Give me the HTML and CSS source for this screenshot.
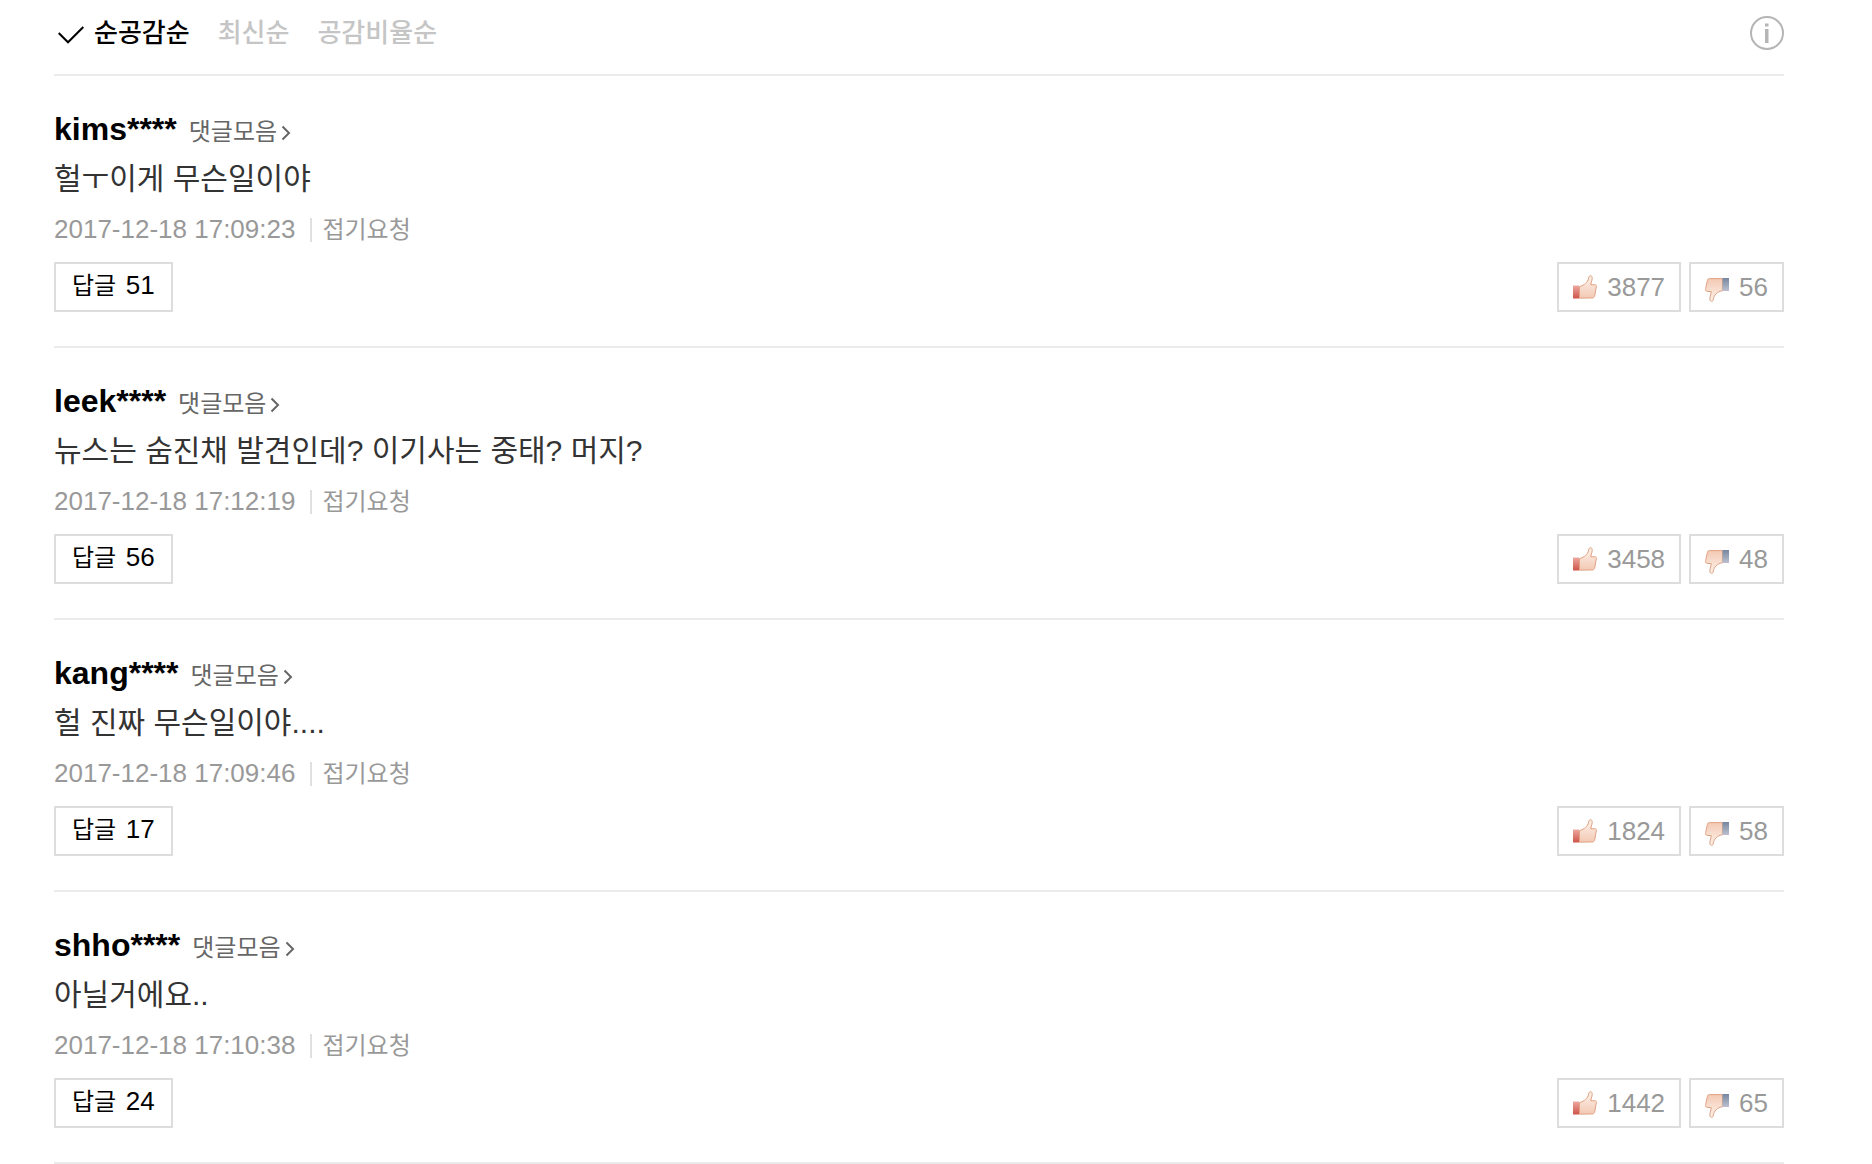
FILE: index.html
```html
<!DOCTYPE html>
<html lang="ko">
<head>
  <meta charset="UTF-8">
  <title>댓글</title>
  <link rel="stylesheet" href="styles.css">
</head>
<body>
  <svg class="sprite" aria-hidden="true">
    <defs>
      <linearGradient id="skin" x1="0" y1="0" x2="0" y2="1">
        <stop offset="0" stop-color="#fdf3ea"/>
        <stop offset="1" stop-color="#f3c9b4"/>
      </linearGradient>
      <linearGradient id="skin-down" x1="0" y1="0" x2="0" y2="1">
        <stop offset="0" stop-color="#f3c9b4"/>
        <stop offset="1" stop-color="#fdf3ea"/>
      </linearGradient>
      <linearGradient id="red" x1="0" y1="0" x2="0" y2="1">
        <stop offset="0" stop-color="#eda9a2"/>
        <stop offset="1" stop-color="#cf5348"/>
      </linearGradient>
      <linearGradient id="blue" x1="0" y1="0" x2="0" y2="1">
        <stop offset="0" stop-color="#76869f"/>
        <stop offset="1" stop-color="#bcc1d0"/>
      </linearGradient>
    </defs>
    <symbol id="up" viewBox="0 0 24 24">
      <path d="M6.500 11.500C11 10.500 15 7 15.700 3C15.900 1.200 16.700.6 17.600.7C19.300.9 19.500 3 18.900 5.200L17.700 9.700L22.200 9.800C23.300 9.900 23.500 10.800 23.300 11.900L21.800 20.500C21.500 22.100 20.800 22.800 19.500 22.900L6.500 23.200Z" fill="url(#skin)" stroke="#e0a283"/>
      <path d="M0 10.500H6V23.500H0Z" fill="url(#red)"/>
    </symbol>
    <symbol id="down" viewBox="0 0 24 24">
      <path d="M17.500.6H4.500C3.200.6 2.600 1.400 2.300 2.700L.6 10.800C.4 12.200.8 13.200 2 13.300L6.300 13.700L5 19.500C4.600 21.700 5.100 23.300 6.500 23.400C7.700 23.400 8.100 22.300 8.400 21C9 17 12 13.700 17.500 12.700Z" fill="url(#skin-down)" stroke="#e0a283"/>
      <path d="M17.500 0H24V13H17.500Z" fill="url(#blue)"/>
    </symbol>
    <symbol id="arrow" viewBox="0 0 10 16">
      <path d="M1.500 1.500L8 8L1.500 14.500" fill="none" stroke="#666" stroke-width="2"/>
    </symbol>
  </svg>

  <div class="comments">
    <div class="sort">
      <ul class="sort-list">
        <li>
          <a class="on" href="#">
            <svg class="check" viewBox="0 0 26 18" aria-hidden="true"><path d="M.7 7L10 16.300L25.300 1" fill="none" stroke="#000" stroke-width="2"/></svg>
            순공감순
          </a>
        </li>
        <li><a href="#">최신순</a></li>
        <li><a href="#">공감비율순</a></li>
      </ul>
      <button class="info" type="button" aria-label="안내">
        <svg viewBox="0 0 34 34" aria-hidden="true">
          <circle cx="17" cy="17" r="16" fill="none" stroke="#b5b5b5" stroke-width="2"/>
          <path d="M15 7.500H18.500V10.500H15ZM15 13H18.500V27H15Z" fill="#b5b5b5"/>
        </svg>
      </button>
    </div>

    <ul class="list">
      <li class="comment">
        <div class="head">
          <strong class="name">kims****</strong>
          <a class="more" href="#">댓글모음<svg class="arrow" aria-hidden="true"><use href="#arrow"/></svg></a>
        </div>
        <p class="text">헐ㅜ이게 무슨일이야</p>
        <div class="meta">
          <span class="date">2017-12-18 17:09:23</span>
          <a class="fold" href="#">접기요청</a>
        </div>
        <div class="tools">
          <button class="btn reply" type="button">답글 <span class="num">51</span></button>
          <button class="btn vote" type="button" aria-label="공감 3877"><svg class="thumb" aria-hidden="true"><use href="#up"/></svg>3877</button>
          <button class="btn vote" type="button" aria-label="비공감 56"><svg class="thumb down" aria-hidden="true"><use href="#down"/></svg>56</button>
        </div>
      </li>

      <li class="comment">
        <div class="head">
          <strong class="name">leek****</strong>
          <a class="more" href="#">댓글모음<svg class="arrow" aria-hidden="true"><use href="#arrow"/></svg></a>
        </div>
        <p class="text">뉴스는 숨진채 발견인데? 이기사는 중태? 머지?</p>
        <div class="meta">
          <span class="date">2017-12-18 17:12:19</span>
          <a class="fold" href="#">접기요청</a>
        </div>
        <div class="tools">
          <button class="btn reply" type="button">답글 <span class="num">56</span></button>
          <button class="btn vote" type="button" aria-label="공감 3458"><svg class="thumb" aria-hidden="true"><use href="#up"/></svg>3458</button>
          <button class="btn vote" type="button" aria-label="비공감 48"><svg class="thumb down" aria-hidden="true"><use href="#down"/></svg>48</button>
        </div>
      </li>

      <li class="comment">
        <div class="head">
          <strong class="name">kang****</strong>
          <a class="more" href="#">댓글모음<svg class="arrow" aria-hidden="true"><use href="#arrow"/></svg></a>
        </div>
        <p class="text">헐 진짜 무슨일이야....</p>
        <div class="meta">
          <span class="date">2017-12-18 17:09:46</span>
          <a class="fold" href="#">접기요청</a>
        </div>
        <div class="tools">
          <button class="btn reply" type="button">답글 <span class="num">17</span></button>
          <button class="btn vote" type="button" aria-label="공감 1824"><svg class="thumb" aria-hidden="true"><use href="#up"/></svg>1824</button>
          <button class="btn vote" type="button" aria-label="비공감 58"><svg class="thumb down" aria-hidden="true"><use href="#down"/></svg>58</button>
        </div>
      </li>

      <li class="comment">
        <div class="head">
          <strong class="name">shho****</strong>
          <a class="more" href="#">댓글모음<svg class="arrow" aria-hidden="true"><use href="#arrow"/></svg></a>
        </div>
        <p class="text">아닐거에요..</p>
        <div class="meta">
          <span class="date">2017-12-18 17:10:38</span>
          <a class="fold" href="#">접기요청</a>
        </div>
        <div class="tools">
          <button class="btn reply" type="button">답글 <span class="num">24</span></button>
          <button class="btn vote" type="button" aria-label="공감 1442"><svg class="thumb" aria-hidden="true"><use href="#up"/></svg>1442</button>
          <button class="btn vote" type="button" aria-label="비공감 65"><svg class="thumb down" aria-hidden="true"><use href="#down"/></svg>65</button>
        </div>
      </li>
    </ul>
  </div>
</body>
</html>
```

FILE: styles.css
```css
body { margin: 0; background: #fff; color: #000; font-family: "Liberation Sans", "Noto Sans CJK KR", sans-serif; }
ul { list-style: none; margin: 0; padding: 0; }
a { color: inherit; text-decoration: none; }
button { font-family: inherit; background: #fff; cursor: pointer; }
.sprite { display: block; width: 0; height: 0; }

.comments { padding: 0 88px 0 54px; }

.sort { display: flex; justify-content: space-between; align-items: center; padding: 13px 0 21px; border-bottom: 2px solid #ebebeb; }
.sort-list { display: flex; gap: 28px; font-size: 26px; font-weight: 500; line-height: 40px; color: #c5c5c5; }
.sort-list a { display: flex; align-items: center; }
.sort-list .on { color: #000; }
.check { width: 26px; height: 18px; margin: 3px 10px 0 4px; }
.info { width: 34px; height: 34px; padding: 0; border: 0; }
.info svg { display: block; }

.comment { padding: 31px 0 34px; border-bottom: 2px solid #ebebeb; }
.head { display: flex; align-items: baseline; gap: 12px; line-height: 44px; }
.name { font-size: 32px; }
.more { font-size: 24px; line-height: 32px; color: #666; }
.arrow { width: 10px; height: 16px; margin-left: 4px; vertical-align: -1px; }
.text { margin: 2px 0 0; font-size: 30px; line-height: 52px; color: #333; }
.meta { display: flex; align-items: center; line-height: 40px; margin-top: 4px; color: #999; }
.date { font-size: 26px; }
.fold { display: flex; align-items: center; padding-top: 2px; font-size: 24px; line-height: 38px; }
.fold::before { content: ""; width: 2px; height: 24px; margin: 0 10px 0 15px; background: #e0e0e0; }
.tools { display: flex; gap: 8px; margin-top: 13px; }
.btn { box-sizing: border-box; height: 50px; border: 2px solid #ddd; }
.reply { margin-right: auto; padding: 0 16px 4px; font-size: 24px; line-height: 36px; color: #000; }
.num { margin-left: 3px; font-size: 26px; }
.vote { display: flex; align-items: center; gap: 10px; padding: 0 14px; font-size: 26px; color: #999; }
.thumb { width: 24px; height: 24px; }
.down { margin-top: 5px; }
```
